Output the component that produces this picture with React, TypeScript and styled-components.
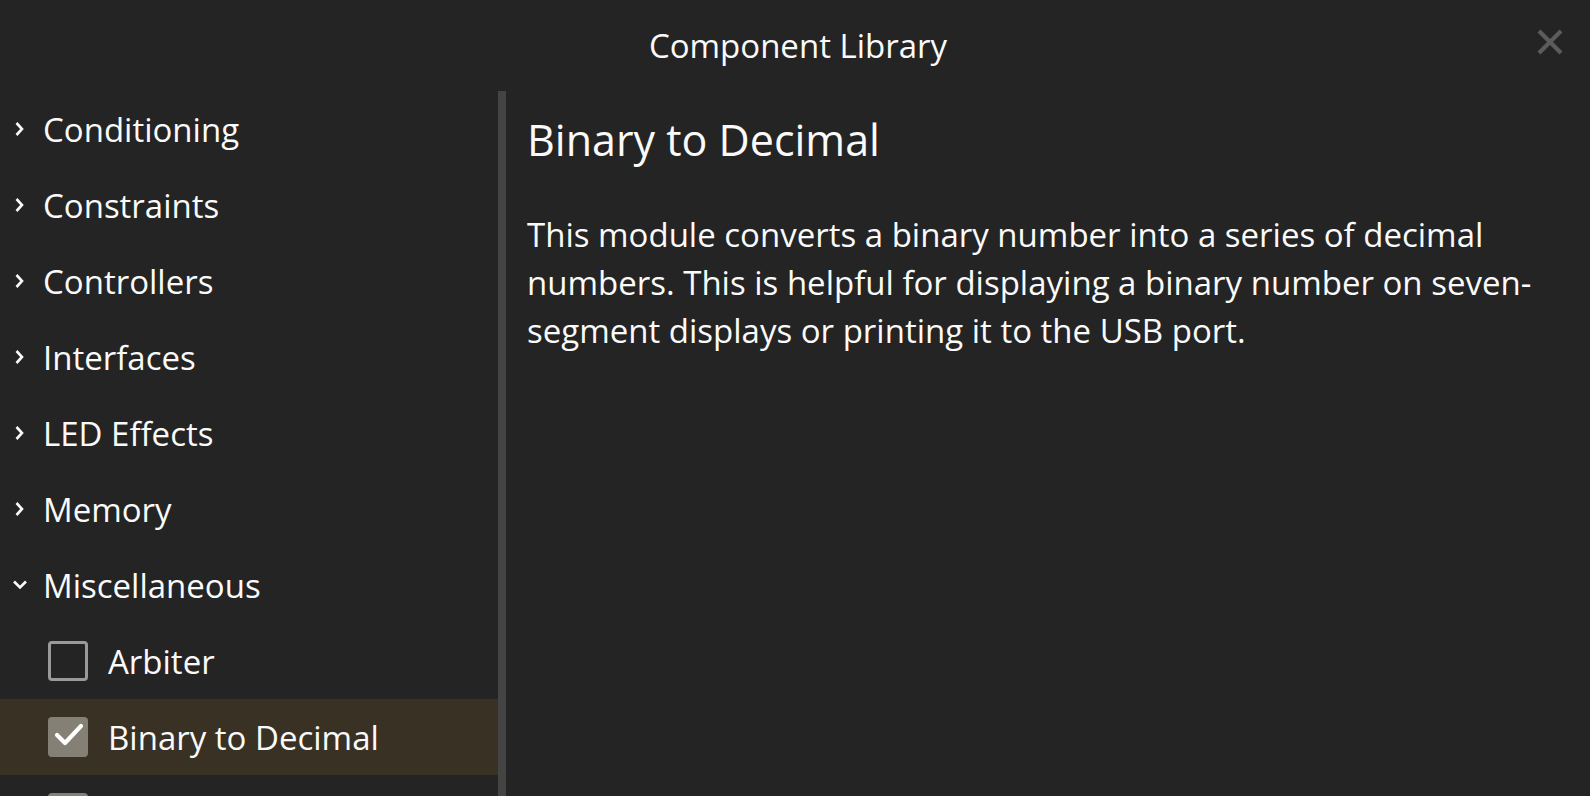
import React from "react";
import styled, { createGlobalStyle } from "styled-components";

const GlobalStyle = createGlobalStyle`
  html, body {
    margin: 0;
    padding: 0;
    background: #242424;
  }
  body {
    font-family: "Open Sans", "Noto Sans", sans-serif;
    color: #fafafa;
    overflow: hidden;
  }
`;

const categories = [
  "Conditioning",
  "Constraints",
  "Controllers",
  "Interfaces",
  "LED Effects",
  "Memory"
];

// last entry sits below the fold, only its checkbox peeks in
const modules = [
  { name: "Arbiter", checked: false, selected: false },
  { name: "Binary to Decimal", checked: true, selected: true },
  { name: "", checked: true, selected: false }
];

const Dialog = styled.div`
  display: flex;
  flex-direction: column;
  height: 100vh;
  background: #242424;
`;

const Header = styled.header`
  height: 91px;
  flex-shrink: 0;
  display: grid;
  grid-template-columns: 1fr auto 1fr;
  align-items: center;
  padding: 0 27px 0 33px;
`;

const Title = styled.h2`
  grid-column: 2;
  margin: 0;
  font-size: 33px;
  font-weight: 500;
  color: #fafafa;
`;

const CloseButton = styled.button`
  grid-column: 3;
  justify-self: end;
  width: 26px;
  height: 26px;
  padding: 0;
  border: none;
  background: none;
  margin-top: -8px;
  display: flex;
  cursor: pointer;
`;

const Body = styled.div`
  flex: 1;
  min-height: 0;
  display: flex;
`;

const Sidebar = styled.nav`
  width: 498px;
  flex-shrink: 0;
  overflow: hidden;
`;

const ScrollTrack = styled.div`
  width: 8px;
  flex-shrink: 0;
  background: #444444;
`;

const Row = styled.div<{ $selected?: boolean; $child?: boolean }>`
  height: 76px;
  display: flex;
  align-items: center;
  padding-left: ${({ $child }) => ($child ? "48px" : "12px")};
  gap: ${({ $child }) => ($child ? "20px" : "15px")};
  background: ${({ $selected }) => ($selected ? "#3a3125" : "transparent")};
  font-size: 33px;
  font-weight: 500;
  white-space: nowrap;
  cursor: pointer;
`;

const Chevron = styled.span`
  width: 16px;
  height: 16px;
  display: flex;
  align-items: center;
  justify-content: center;
`;

const Checkbox = styled.span<{ $checked?: boolean }>`
  width: 40px;
  height: 40px;
  box-sizing: border-box;
  border-radius: 4px;
  border: 3px solid ${({ $checked }) => ($checked ? "#858076" : "#9a9a9a")};
  background: ${({ $checked }) => ($checked ? "#858076" : "transparent")};
  display: flex;
  align-items: center;
  justify-content: center;
  flex-shrink: 0;
`;

const Content = styled.main`
  flex: 1;
  padding: 0 30px 0 21px;
`;

const Heading = styled.h1`
  margin: 23px 0 0;
  font-size: 43px;
  font-weight: 500;
  line-height: 1.2;
`;

const Description = styled.p`
  margin: 45px 0 0;
  font-size: 33px;
  font-weight: 500;
  line-height: 48px;
  max-width: 1025px;
`;

const ChevronIcon = ({ open }: { open?: boolean }) => (
  <svg width="16" height="16" viewBox="0 0 16 16">
    <path
      d={open ? "M2 4.5 L8 10.5 L14 4.5" : "M4.5 2 L10 8 L4.5 14"}
      fill="none"
      stroke="#fafafa"
      strokeWidth="2.6"
    />
  </svg>
);

const CheckIcon = () => (
  <svg width="34" height="34" viewBox="0 0 34 34">
    <path
      d="M6 15 L14 23 L30 6"
      fill="none"
      stroke="#ffffff"
      strokeWidth="4.2"
      strokeLinecap="round"
      strokeLinejoin="round"
    />
  </svg>
);

const App = () => {
  return (
    <Dialog>
      <GlobalStyle />
      <Header>
        <Title>Component Library</Title>
        <CloseButton aria-label="Close">
          <svg width="26" height="26" viewBox="0 0 26 26">
            <path d="M2 2 L24 24 M24 2 L2 24" stroke="#5c5c5c" strokeWidth="4.2" />
          </svg>
        </CloseButton>
      </Header>
      <Body>
        <Sidebar>
          {categories.map(name => (
            <Row key={name}>
              <Chevron>
                <ChevronIcon />
              </Chevron>
              {name}
            </Row>
          ))}
          <Row>
            <Chevron>
              <ChevronIcon open />
            </Chevron>
            Miscellaneous
          </Row>
          {modules.map((m, i) => (
            <Row key={i} $child $selected={m.selected}>
              <Checkbox $checked={m.checked}>{m.checked && <CheckIcon />}</Checkbox>
              {m.name}
            </Row>
          ))}
        </Sidebar>
        <ScrollTrack />
        <Content>
          <Heading>Binary to Decimal</Heading>
          <Description>
            This module converts a binary number into a series of decimal
            numbers. This is helpful for displaying a binary number on
            seven-segment displays or printing it to the USB port.
          </Description>
        </Content>
      </Body>
    </Dialog>
  );
};

export default App;
